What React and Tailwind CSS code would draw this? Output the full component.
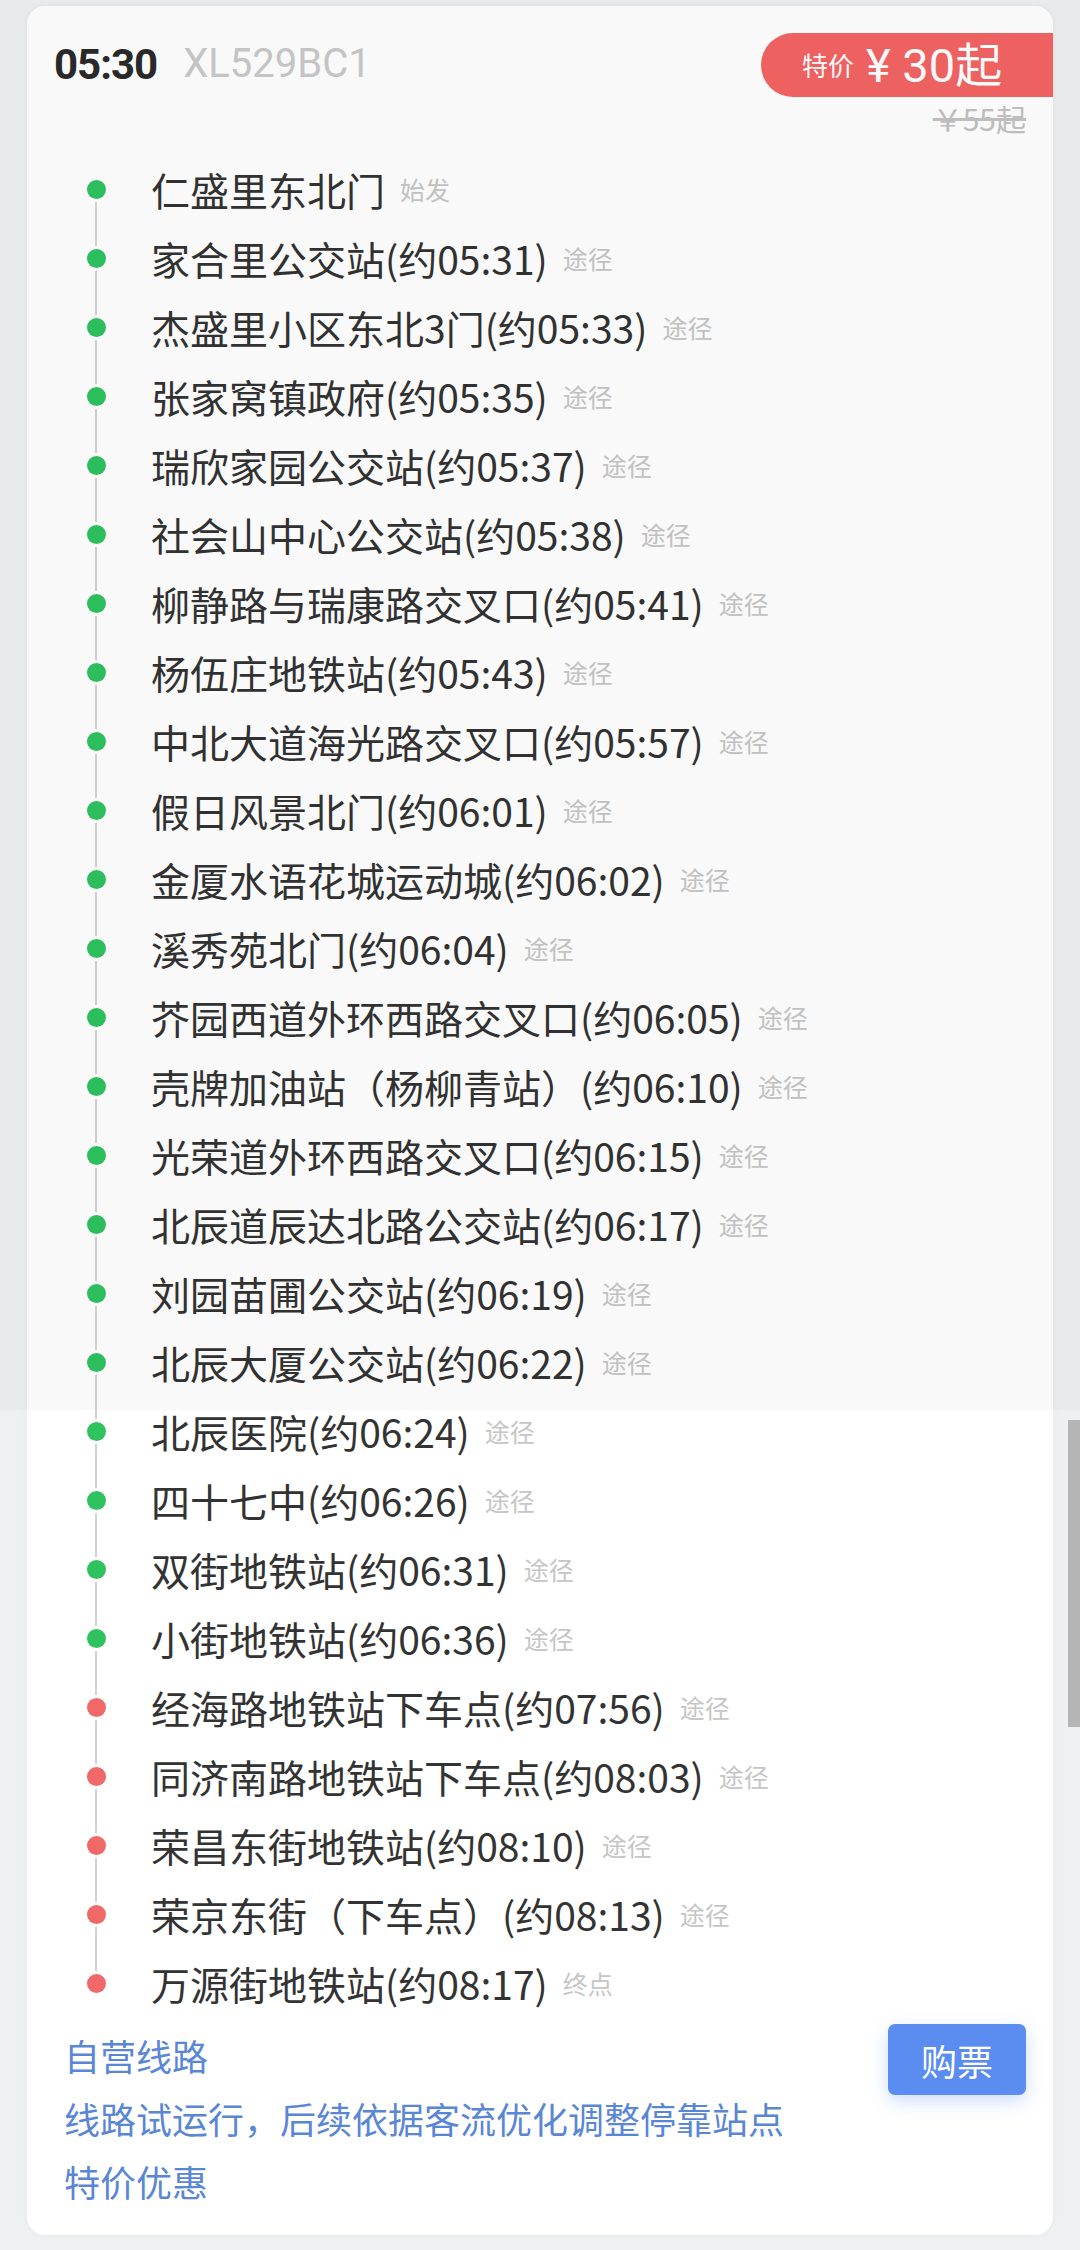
import React from "react";

const stops = [
  { name: "仁盛里东北门", tag: "始发", end: false },
  { name: "家合里公交站(约05:31)", tag: "途径" },
  { name: "杰盛里小区东北3门(约05:33)", tag: "途径" },
  { name: "张家窝镇政府(约05:35)", tag: "途径" },
  { name: "瑞欣家园公交站(约05:37)", tag: "途径" },
  { name: "社会山中心公交站(约05:38)", tag: "途径" },
  { name: "柳静路与瑞康路交叉口(约05:41)", tag: "途径" },
  { name: "杨伍庄地铁站(约05:43)", tag: "途径" },
  { name: "中北大道海光路交叉口(约05:57)", tag: "途径" },
  { name: "假日风景北门(约06:01)", tag: "途径" },
  { name: "金厦水语花城运动城(约06:02)", tag: "途径" },
  { name: "溪秀苑北门(约06:04)", tag: "途径" },
  { name: "芥园西道外环西路交叉口(约06:05)", tag: "途径" },
  { name: "壳牌加油站（杨柳青站）(约06:10)", tag: "途径" },
  { name: "光荣道外环西路交叉口(约06:15)", tag: "途径" },
  { name: "北辰道辰达北路公交站(约06:17)", tag: "途径" },
  { name: "刘园苗圃公交站(约06:19)", tag: "途径" },
  { name: "北辰大厦公交站(约06:22)", tag: "途径" },
  { name: "北辰医院(约06:24)", tag: "途径" },
  { name: "四十七中(约06:26)", tag: "途径" },
  { name: "双街地铁站(约06:31)", tag: "途径" },
  { name: "小街地铁站(约06:36)", tag: "途径" },
  { name: "经海路地铁站下车点(约07:56)", tag: "途径", off: true },
  { name: "同济南路地铁站下车点(约08:03)", tag: "途径", off: true },
  { name: "荣昌东街地铁站(约08:10)", tag: "途径", off: true },
  { name: "荣京东街（下车点）(约08:13)", tag: "途径", off: true },
  { name: "万源街地铁站(约08:17)", tag: "终点", off: true },
];

const StopRow = ({ stop, first, last }) => (
  <div className="flex items-center h-[69px]">
    <div className="relative w-[124px] h-full flex items-center">
      {!first && <div className="absolute left-[68px] top-0 h-[22px] w-[2px] bg-[#d2d2d2]" />}
      {!last && <div className="absolute left-[68px] bottom-0 h-[22px] w-[2px] bg-[#d2d2d2]" />}
      <div
        className={`ml-[60px] w-[19px] h-[19px] rounded-full ${stop.off ? "bg-[#f06868]" : "bg-[#2ec35f]"}`}
      />
    </div>
    <span className="text-[39px] leading-none text-[#333333] whitespace-nowrap">{stop.name}</span>
    <span className="ml-[15px] text-[25px] leading-none text-[#c6c6c6]">{stop.tag}</span>
  </div>
);

export default function App() {
  return (
    <div className="relative min-h-[2250px] w-[1080px] bg-[#eef0f2] pt-[6px] font-['Noto_Sans_CJK_SC',sans-serif] overflow-hidden">
      <div className="relative mx-[27px] w-[1026px] h-[2229px] bg-white rounded-[18px] shadow-[0_0_6px_rgba(0,0,0,0.05)] overflow-hidden">
        {/* header */}
        <div className="flex items-center h-[120px] pl-[27px] pb-[4px]">
          <span className="font-['Roboto',sans-serif] font-bold text-[42px] text-[#2a2a2a] tracking-[-1px]">05:30</span>
          <span className="ml-[26px] font-['Roboto',sans-serif] text-[40px] text-[#c9c9c9]">XL529BC1</span>
        </div>
        <div className="absolute right-0 top-[27px] flex flex-col items-end">
          <div className="flex items-center h-[64px] w-[292px] pl-[41px] rounded-l-full bg-[#f36464] text-white">
            <span className="text-[26px] leading-none">特价</span>
            <span className="ml-[12px] text-[47px] leading-none font-['Roboto','Noto_Sans_CJK_SC',sans-serif]">¥ 30起</span>
          </div>
          <span className="mr-[27px] mt-[2px] text-[30px] leading-[38px] text-[#c2c2c2] line-through">￥55起</span>
        </div>

        {/* stops */}
        <div className="mt-[29px] flex flex-col">
          {stops.map((s, i) => (
            <StopRow key={i} stop={s} first={i === 0} last={i === stops.length - 1} />
          ))}
        </div>

        {/* footer */}
        <div className="flex justify-between pl-[37px] pr-[27px] mt-[6px]">
          <div className="flex flex-col text-[36px] leading-[63px] text-[#5a86d6]">
            <span>自营线路</span>
            <span>线路试运行，后续依据客流优化调整停靠站点</span>
            <span>特价优惠</span>
          </div>
          <button className="w-[138px] h-[71px] rounded-[7px] bg-[#5b8cf0] text-white text-[36px] shadow-[0_6px_18px_rgba(91,140,240,0.3)]">
            购票
          </button>
        </div>
      </div>

      {/* dim overlay on upper part */}
      <div className="pointer-events-none absolute left-0 top-0 w-full h-[1410px] bg-black/[0.025]" />
      {/* scrollbar */}
      <div className="absolute right-0 top-[1420px] w-[12px] h-[307px] bg-[#b5b5b5]" />
    </div>
  );
}
